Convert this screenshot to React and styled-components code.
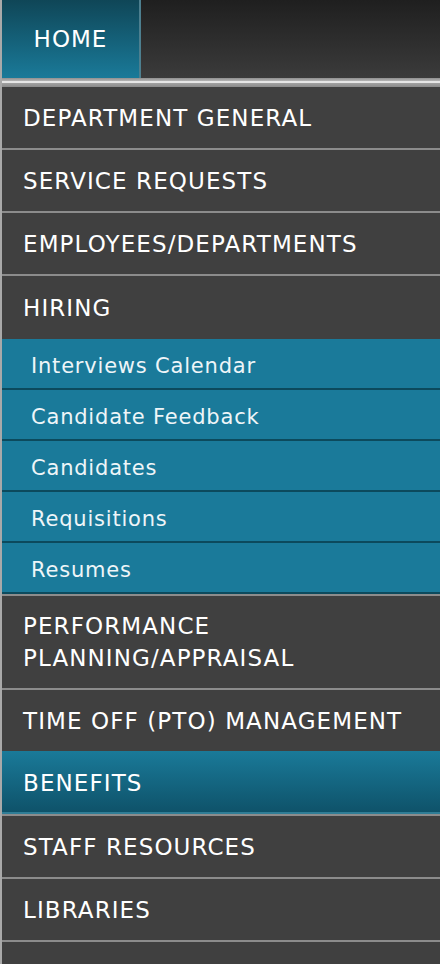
import styled, { createGlobalStyle } from "styled-components";

const GlobalStyle = createGlobalStyle`
  html, body {
    margin: 0;
    padding: 0;
    background: #404040;
  }
  body {
    font-family: "DejaVu Sans", sans-serif;
  }
`;

const Sidebar = styled.nav`
  width: 440px;
  min-height: 964px;
  background: #404040;
  border-left: 2px solid #a9a9a9;
  box-sizing: border-box;
  overflow: hidden;
`;

const TopBar = styled.div`
  height: 78px;
  display: flex;
  background: linear-gradient(#1f1f1f, #3b3b3b);
`;

const HomeTab = styled.a`
  width: 137px;
  display: flex;
  align-items: center;
  justify-content: center;
  color: #fff;
  font-size: 23px;
  letter-spacing: 1px;
  text-decoration: none;
  background: linear-gradient(#0f4657, #1a7a99);
  border-right: 2px solid #4d7f8f;
`;

const Divider = styled.div`
  height: 9px;
  background: linear-gradient(
    #8f8f8f 0,
    #b5b5b5 3px,
    #e6e6e6 3px,
    #e6e6e6 5px,
    #a2a2a2 5px,
    #8a8a8a 9px
  );
`;

const List = styled.ul`
  margin: 0;
  padding: 0;
  list-style: none;
`;

const Item = styled.li`
  padding: ${({ $tall }) => ($tall ? "14px 0 14px 21px" : "0 0 0 21px")};
  display: flex;
  flex-direction: column;
  justify-content: center;
  color: #fff;
  font-size: 23px;
  line-height: 32px;
  letter-spacing: 1.1px;
  white-space: nowrap;
  background: ${({ $active }) =>
    $active ? "linear-gradient(#1a7a99, #0e5168)" : "#404040"};
  border-bottom: ${({ $flush }) => ($flush ? "0" : "2px solid #8c8c8c")};
  box-sizing: border-box;
  margin-top: ${({ $active }) => ($active ? "-2px" : "0")};
  height: ${({ $tall, $active }) =>
    $tall ? "auto" : $active ? "65px" : "63px"};
  box-shadow: ${({ $active }) =>
    $active ? "inset 0 -2px 0 #2f7d96" : "none"};
`;

const SubList = styled.ul`
  margin: 0;
  padding: 0;
  list-style: none;
  border-bottom: 2px solid #8c8c8c;
`;

const SubItem = styled.li`
  height: 51px;
  box-sizing: border-box;
  display: flex;
  align-items: center;
  padding: 4px 0 0 29px;
  color: #eef5f8;
  font-size: 21px;
  letter-spacing: 0.8px;
  background: #1a7a9a;
  border-bottom: 2px solid #0c4a5d;
`;

const top = [
  "DEPARTMENT GENERAL",
  "SERVICE REQUESTS",
  "EMPLOYEES/DEPARTMENTS",
];

const sub = [
  "Interviews Calendar",
  "Candidate Feedback",
  "Candidates",
  "Requisitions",
  "Resumes",
];

const rest = [
  { label: "TIME OFF (PTO) MANAGEMENT" },
  { label: "BENEFITS", active: true },
  { label: "STAFF RESOURCES" },
  { label: "LIBRARIES" },
  { label: "DISCUSSIONS" },
];

export default function App() {
  return (
    <>
      <GlobalStyle />
      <Sidebar>
        <TopBar>
          <HomeTab href="#">HOME</HomeTab>
        </TopBar>
        <Divider />
        <List>
          {top.map((t) => (
            <Item key={t}>{t}</Item>
          ))}
          <Item $flush>HIRING</Item>
          <SubList>
            {sub.map((s) => (
              <SubItem key={s}>{s}</SubItem>
            ))}
          </SubList>
          <Item $tall>
            <span>PERFORMANCE</span>
            <span>PLANNING/APPRAISAL</span>
          </Item>
          {rest.map((r) => (
            <Item key={r.label} $active={r.active}>
              {r.label}
            </Item>
          ))}
        </List>
      </Sidebar>
    </>
  );
}
